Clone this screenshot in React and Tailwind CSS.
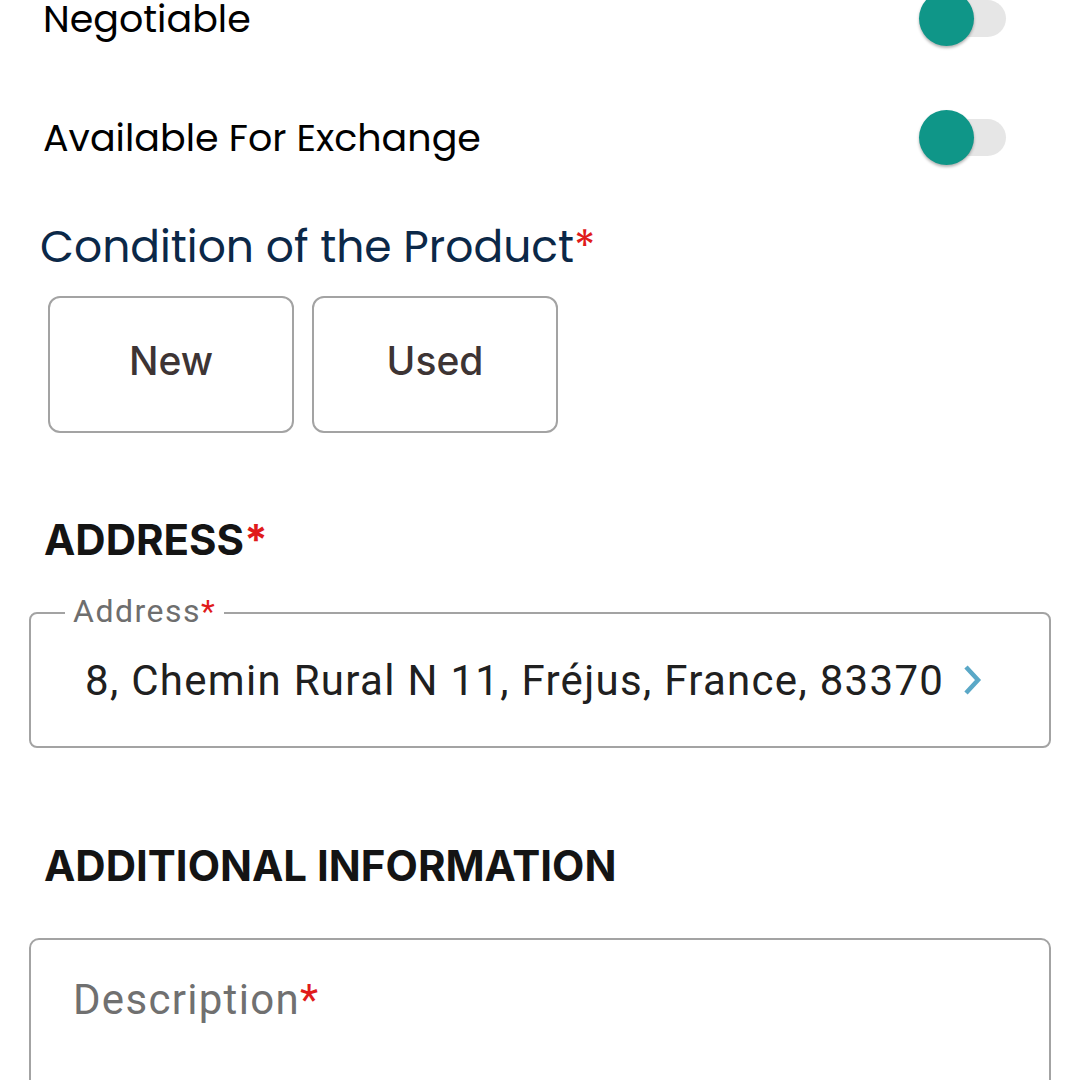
function Toggle() {
  return (
    <div className="relative w-[90px] h-[60px] flex items-center">
      <div className="absolute left-[8px] w-[79px] h-[37px] rounded-full bg-[#e6e6e6]" />
      <div className="absolute left-0 w-[55px] h-[55px] rounded-full bg-[#0f9688] shadow-[0_2px_3px_rgba(0,0,0,0.3)]" />
    </div>
  );
}

function ToggleRow({ label }) {
  return (
    <div className="h-[80px] flex items-center justify-between pl-[43px] pr-[71px]">
      <span className="text-[38px] text-black font-['Poppins','Inter',sans-serif]">{label}</span>
      <Toggle />
    </div>
  );
}

export default function App() {
  return (
    <div className="w-[1080px] h-[1080px] overflow-hidden bg-white">
      <div className="-mt-[22px]">
        <ToggleRow label="Negotiable" />
        <div className="mt-[39px]">
          <ToggleRow label="Available For Exchange" />
        </div>
      </div>

      <h2 className="mt-[44px] pl-[40px] h-[52px] leading-[52px] text-[44px] text-[#0b2848] font-['Poppins','Inter',sans-serif]">
        Condition of the Product<span className="text-[#e01b1b]">*</span>
      </h2>

      <div className="mt-[23px] pl-[48px] flex gap-[18px]">
        <button className="w-[246px] h-[137px] pb-[6px] rounded-[12px] border-2 border-[#a3a3a3] text-[39px] font-medium text-[#3d3434] font-['Inter',sans-serif]">New</button>
        <button className="w-[246px] h-[137px] pb-[6px] rounded-[12px] border-2 border-[#a3a3a3] text-[39px] font-medium text-[#3d3434] font-['Inter',sans-serif]">Used</button>
      </div>

      <h3 className="mt-[83px] pl-[44px] h-[48px] leading-[48px] text-[42px] font-bold text-[#141414] font-['Inter',sans-serif]">
        ADDRESS<span className="text-[#e01b1b]">*</span>
      </h3>

      <div className="mt-[48px] mx-[29px] relative h-[136px] rounded-[8px] border-2 border-[#a3a3a3] flex items-center pl-[54px] pr-[64px] font-['Roboto',sans-serif]">
        <span className="absolute left-[34px] -top-[23px] px-[8px] bg-white text-[32px] leading-[40px] tracking-[1.5px] text-[#6e6e6e]">
          Address<span className="text-[#e01b1b]">*</span>
        </span>
        <span className="flex-1 text-[42px] tracking-[1.3px] text-[#202020] whitespace-nowrap overflow-hidden">8, Chemin Rural N 11, Fréjus, France, 83370</span>
        <svg width="26" height="34" viewBox="0 0 26 34" className="ml-[12px]">
          <path d="M7 4 L19 17 L7 30" fill="none" stroke="#5aa8c7" strokeWidth="4.5" />
        </svg>
      </div>

      <h3 className="mt-[94px] pl-[44px] h-[48px] leading-[48px] text-[42px] font-bold text-[#141414] font-['Inter',sans-serif]">
        ADDITIONAL INFORMATION
      </h3>

      <div className="mt-[48px] mx-[29px] h-[200px] rounded-[10px] border-2 border-[#a3a3a3] pt-[36px] pl-[42px] font-['Roboto',sans-serif]">
        <span className="text-[42px] leading-[48px] tracking-[1.3px] text-[#707070]">
          Description<span className="text-[#e01b1b]">*</span>
        </span>
      </div>
    </div>
  );
}
